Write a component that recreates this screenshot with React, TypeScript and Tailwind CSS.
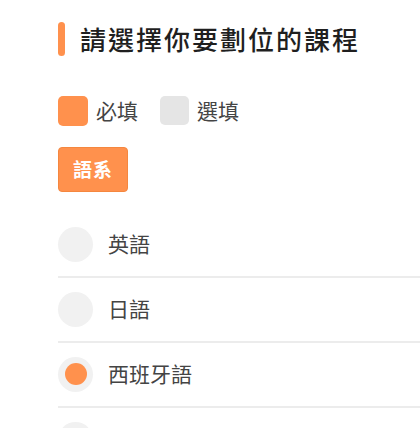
const courses = [
  { name: "英語", checked: false },
  { name: "日語", checked: false },
  { name: "西班牙語", checked: true },
  { name: "法語", checked: false },
];

export default function App() {
  return (
    <div
      className="w-[420px] h-[428px] overflow-hidden bg-white pl-[58px] pt-[22px]"
      style={{ fontFamily: '"Noto Sans CJK TC", "Noto Sans", sans-serif' }}
    >
      {/* title */}
      <div className="flex items-center h-[34px]">
        <div className="w-[7px] h-[34px] rounded-full bg-[#ff914d]" />
        <h1 className="ml-[15px] text-[26px] leading-none tracking-[2px] text-[#1f1f1f] font-medium">
          請選擇你要劃位的課程
        </h1>
      </div>

      {/* legend */}
      <div className="flex items-center mt-[39px] h-[31px]">
        <span className="w-[30px] h-[30px] rounded-[5px] bg-[#ff914d]" />
        <span className="ml-[8px] text-[21px] text-[#444]">必填</span>
        <span className="ml-[22px] w-[29px] h-[29px] rounded-[5px] bg-[#e5e5e5]" />
        <span className="ml-[8px] text-[21px] text-[#444]">選填</span>
      </div>

      <button className="mt-[21px] w-[70px] h-[45px] rounded-[4px] bg-[#ff914d] border border-[#f5873f] text-white text-[19px] font-bold tracking-[1px]">
        語系
      </button>

      {/* course list */}
      <ul className="mt-[21px]">
        {courses.map((c) => (
          <li key={c.name} className="flex items-center h-[65px] border-b-2 border-[#ececec] pb-[1px]">
            <span className="w-[35px] h-[35px] rounded-full bg-[#f1f1f1] flex items-center justify-center">
              {c.checked && <span className="w-[22px] h-[22px] rounded-full bg-[#ff914d]" />}
            </span>
            <span className="ml-[15px] text-[21px] text-[#444]">{c.name}</span>
          </li>
        ))}
      </ul>
    </div>
  );
}
